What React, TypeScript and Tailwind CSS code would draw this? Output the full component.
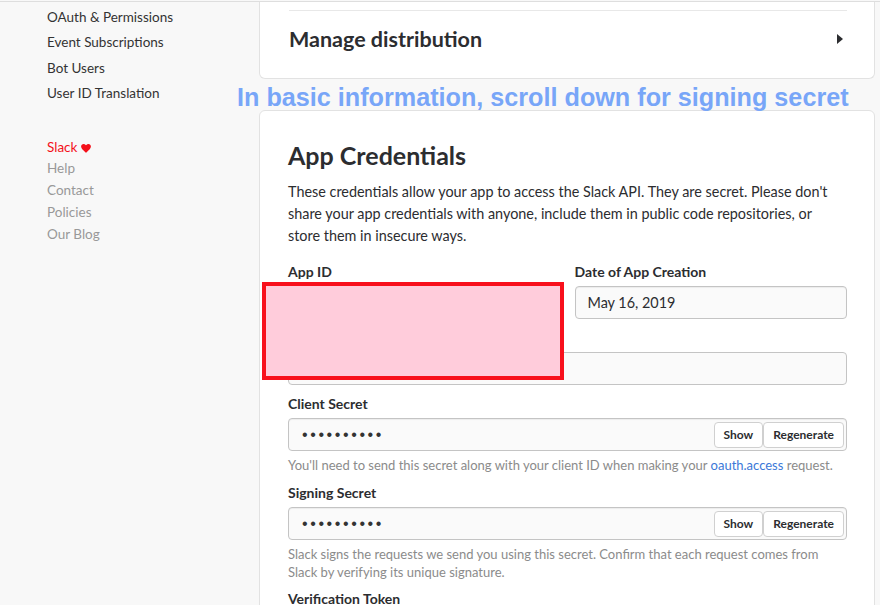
import React from 'react';

const navItems = ['OAuth & Permissions', 'Event Subscriptions', 'Bot Users', 'User ID Translation'];
const footerLinks = ['Help', 'Contact', 'Policies', 'Our Blog'];

const Field: React.FC<{ label: string; children: React.ReactNode; className?: string }> = ({ label, children, className }) => (
  <div className={className}>
    <div className="text-[14px] font-bold leading-[20px] text-[#2c2d30] mb-[4px]">{label}</div>
    {children}
  </div>
);

const SecretInput: React.FC = () => (
  <div className="flex items-center h-[33px] rounded-[4px] border border-[#c4c4c4] bg-[#fafafa] pl-[13px] pr-[2px] shadow-[inset_0_1px_1px_rgba(0,0,0,0.06)]">
    <span className="flex-1 text-[#333] text-[16px] tracking-[2.6px] font-['Liberation_Sans',sans-serif]">••••••••••</span>
    <button className="h-[26px] px-[9px] rounded-[4px] border border-[#d0d0d0] bg-white text-[12px] font-bold text-[#2c2d30]">Show</button>
    <button className="h-[26px] px-[9px] rounded-[4px] border border-[#d0d0d0] bg-white text-[12px] font-bold text-[#2c2d30]">Regenerate</button>
  </div>
);

export default function App() {
  return (
    <div className="relative h-[605px] w-[880px] overflow-hidden bg-[#f8f8f8] font-['Lato',sans-serif] text-[#2c2d30]">
      <div className="h-[1px] mt-[1px] bg-[#dedede]" />
      <div className="flex">
        <aside className="w-[259px] pl-[47px] pt-[3px]">
          <ul className="text-[13.5px] leading-[25.4px] text-[#333]">
            {navItems.map((item) => (
              <li key={item}>{item}</li>
            ))}
          </ul>
          <ul className="mt-[30px] text-[13.5px] leading-[21.8px] text-[#999]">
            <li className="text-[#f4101a] flex items-center gap-[4px]">
              Slack
              <svg width="10" height="9" viewBox="0 0 24 22" className="mt-[1px]">
                <path d="M12 21.5 10.3 20C4.2 14.5 0 10.7 0 6.1 0 2.7 2.7 0 6.1 0c1.9 0 3.8.9 5.9 2.9C14.1.9 16 0 17.9 0 21.3 0 24 2.7 24 6.1c0 4.6-4.2 8.4-10.3 13.9z" fill="#f4101a" />
              </svg>
            </li>
            {footerLinks.map((item) => (
              <li key={item}>{item}</li>
            ))}
          </ul>
        </aside>

        <main className="w-[616px]">
          <section className="h-[77px] rounded-b-[6px] border-x border-b border-[#e2e2e2] bg-white pl-[29px] pr-[27px] pt-[8px]">
            <div className="h-px bg-[#e8e8e8]" />
            <div className="flex items-center justify-between h-[56px]">
              <h2 className="text-[21.5px] font-bold text-[#2c2d30]">Manage distribution</h2>
              <svg width="6" height="10" viewBox="0 0 6 10" className="mr-[4px]">
                <path d="M0 0 6 5 0 10Z" fill="#2c2d30" />
              </svg>
            </div>
          </section>

          <section className="mt-[31px] rounded-[6px] border border-[#e2e2e2] bg-white pl-[28px] pr-[27px] pt-[28px] pb-[20px]">
            <h1 className="text-[25px] leading-[32px] font-bold text-[#2c2d30]">App Credentials</h1>
            <p className="mt-[10px] text-[14.4px] leading-[22px] text-[#2c2d30]">
              These credentials allow your app to access the Slack API. They are secret. Please don't share your app credentials with anyone, include them in public code repositories, or store them in insecure ways.
            </p>

            <div className="mt-[15px] grid grid-cols-2 gap-[14px]">
              <Field label="App ID">
                <div className="h-[33px] rounded-[4px] border border-[#c4c4c4] bg-[#fafafa]" />
              </Field>
              <Field label="Date of App Creation">
                <div className="flex items-center h-[33px] rounded-[4px] border border-[#c4c4c4] bg-[#fafafa] px-[12px] text-[14.4px] text-[#2c2d30] shadow-[inset_0_1px_1px_rgba(0,0,0,0.06)]">
                  May 16, 2019
                </div>
              </Field>
            </div>

            <Field label="Client ID" className="mt-[9px]">
              <div className="h-[33px] rounded-[4px] border border-[#c4c4c4] bg-[#fafafa]" />
            </Field>

            <Field label="Client Secret" className="mt-[9px]">
              <SecretInput />
              <p className="mt-[5px] text-[13px] leading-[18px] text-[#8b8b8b]">
                You'll need to send this secret along with your client ID when making your <span className="text-[#3b78d8]">oauth.access</span> request.
              </p>
            </Field>

            <Field label="Signing Secret" className="mt-[9px]">
              <SecretInput />
              <p className="mt-[5px] text-[13px] leading-[18px] text-[#8b8b8b]">
                Slack signs the requests we send you using this secret. Confirm that each request comes from Slack by verifying its unique signature.
              </p>
            </Field>

            <Field label="Verification Token" className="mt-[8px]">
              <div className="h-[33px] rounded-[4px] border border-[#c4c4c4] bg-[#fafafa]" />
            </Field>
          </section>
        </main>
      </div>

      <div className="absolute left-[237px] top-[83px] text-[25.2px] leading-[28px] font-bold text-[#78a6f8] font-['Liberation_Sans',Arial,sans-serif] whitespace-nowrap">
        In basic information, scroll down for signing secret
      </div>

      <div className="absolute left-[262px] top-[282px] w-[302px] h-[98px] border-[4px] border-[#f8101c] bg-[#ffccdb]" />
    </div>
  );
}
